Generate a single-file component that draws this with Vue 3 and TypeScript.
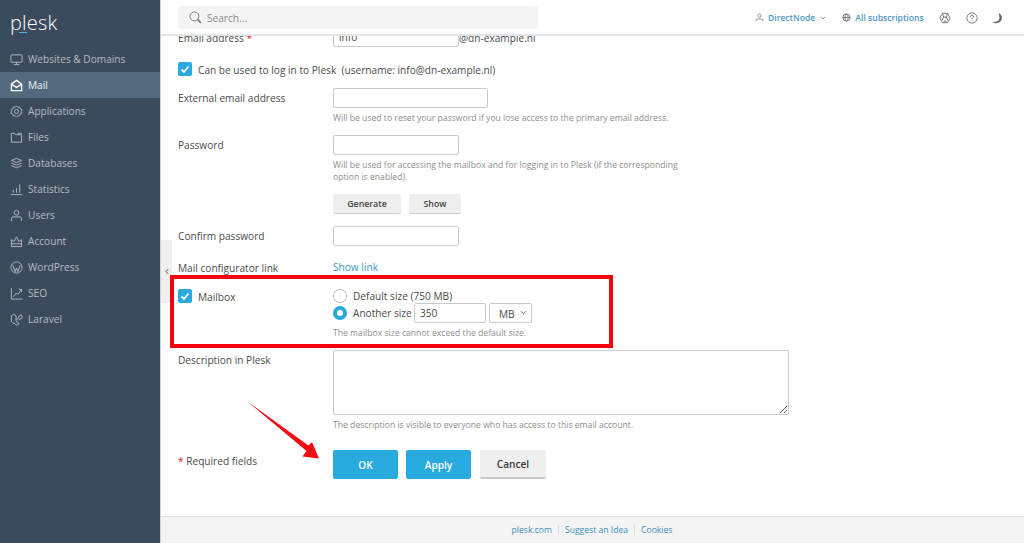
<script setup lang="ts">
interface NavItem { label: string; icon: string; active?: boolean }
const nav: NavItem[] = [
  { label: 'Websites & Domains', icon: 'monitor' },
  { label: 'Mail', icon: 'mail', active: true },
  { label: 'Applications', icon: 'gear' },
  { label: 'Files', icon: 'folder' },
  { label: 'Databases', icon: 'db' },
  { label: 'Statistics', icon: 'stats' },
  { label: 'Users', icon: 'user' },
  { label: 'Account', icon: 'crown' },
  { label: 'WordPress', icon: 'wp' },
  { label: 'SEO', icon: 'seo' },
  { label: 'Laravel', icon: 'laravel' },
]
</script>

<template>
  <div class="page">
    <aside class="side">
      <div class="logo">plesk<i class="logo-line"></i></div>
      <nav class="nav">
        <div v-for="n in nav" :key="n.label" class="nav-item" :class="{ active: n.active }">
          <svg class="nav-icon" viewBox="0 0 14 14" fill="none" stroke="currentColor" stroke-width="1">
            <template v-if="n.icon === 'monitor'"><rect x="1" y="2" width="12" height="8" rx="1" /><path d="M4 12.5h6M7 10v2.5" /></template>
            <template v-else-if="n.icon === 'mail'"><path d="M1.5 5.5 7 1.5l5.5 4v7h-11z" stroke-width="1.4" /><path d="M1.5 5.5 7 9l5.5-3.5" stroke-width="1.4" /></template>
            <template v-else-if="n.icon === 'gear'"><circle cx="7" cy="7" r="2.2" /><path d="M7 1l1.4 1.5 2-.3.6 2 1.9.9-.6 1.9.6 1.9-1.9.9-.6 2-2-.3L7 13l-1.4-1.5-2 .3-.6-2-1.9-.9.6-1.9-.6-1.900 1.900-.9.6-2 2 .3z" /></template>
            <template v-else-if="n.icon === 'folder'"><path d="M1.500 2.500h3.500l1 1.500h6.500v8h-11zM8 2.500h4.500" /></template>
            <template v-else-if="n.icon === 'db'"><path d="M7 1.500l5.500 2.200L7 6 1.500 3.700z" /><path d="M1.500 6.500 7 8.800l5.500-2.300M1.500 9.300 7 11.600l5.500-2.300" /></template>
            <template v-else-if="n.icon === 'stats'"><path d="M1 12.500h12M3.500 10.500v-3M7 10.500v-5M10.500 10.500V1.500" /></template>
            <template v-else-if="n.icon === 'user'"><circle cx="7" cy="4" r="2.500" /><path d="M1.500 13v-2.500a2 2 0 0 1 2-2h7a2 2 0 0 1 2 2V13" /></template>
            <template v-else-if="n.icon === 'crown'"><path d="M1.500 5 4.500 7 7 2l2.500 5 3-2v7.500h-11z" /><path d="M1.500 9.500h11" /></template>
            <template v-else-if="n.icon === 'wp'"><circle cx="7" cy="7" r="6" /><path d="M3 4.500 5.500 11.500 7 7.500l1.500 4L11 4.500" /></template>
            <template v-else-if="n.icon === 'seo'"><path d="M1.500 1v12h12" /><path d="M3.500 10.500 7 6.500l1.500 1.500 4-5.500M9.500 2.500h3v3" /></template>
            <template v-else><path d="M1.500 3 4 1.500 6.500 3v6l3 1.800V12l-2 1L3 10.500 1.500 9.500zM6.500 7l3-1.700V3.500L12 2l1 1.500v2L9.500 7.500" /></template>
          </svg>
          <span>{{ n.label }}</span>
        </div>
      </nav>
    </aside>

    <div class="right">
      <header class="top">
        <div class="search">
          <svg class="search-icon" viewBox="0 0 14 14" fill="none" stroke="#6f7478" stroke-width="1"><circle cx="5.800" cy="5.800" r="4.800" /><path d="M9.300 9.300l3.500 3.500" stroke-width="1.600" /></svg>
          <span>Search...</span>
        </div>
        <div class="top-links">
          <span class="tl tl-user">
            <svg class="ti" viewBox="0 0 12 12" fill="none" stroke="#6f7478"><circle cx="6" cy="3.500" r="2.200" /><path d="M1.500 11V9.500a1.500 1.500 0 0 1 1.500-1.500h6a1.500 1.500 0 0 1 1.500 1.500V11" /></svg>
            <b>DirectNode</b>
            <svg class="caret" viewBox="0 0 6 4" fill="none" stroke="#8a9299"><path d="M1 1l2 2 2-2" /></svg>
          </span>
          <span class="tl tl-subs">
            <svg class="ti" viewBox="0 0 12 12" fill="none" stroke="#55606a"><circle cx="6" cy="6" r="4.800" /><ellipse cx="6" cy="6" rx="2.200" ry="4.800" /><path d="M1.200 6h9.600" /></svg>
            <b>All subscriptions</b>
          </span>
          <svg class="ic-a" viewBox="0 0 14 14" fill="none" stroke="#62686e"><path d="M4 1.500h6L13 7l-3 5.500H4L1 7z" /><path d="M4 1.500 5.500 6 3.500 10M10 1.500 8.500 6l2 4M5.500 6h3M5 12.500 7 10l2 2.500" /></svg>
          <svg class="ic-b" viewBox="0 0 14 14" fill="none" stroke="#62686e"><circle cx="7" cy="7" r="6" /><path d="M5.200 5.500a1.800 1.800 0 1 1 2.600 1.600c-.6.300-.8.700-.8 1.400M7 9.800v1" /></svg>
          <svg class="ic-c" viewBox="0 0 14 14" fill="#62686e"><path d="M8.500 1c3 1.500 4.500 3.800 4.200 6.400-.3 3.200-3.200 5.600-6.700 5.600-1.600 0-3.100-.5-4.300-1.400 3.700.4 7.300-.8 8-3.800.5-2.300-.2-4.800-1.200-6.800z" /></svg>
        </div>
      </header>

      <main class="main">
        <div class="collapse"><svg viewBox="0 0 5 8" fill="none" stroke="#3c4b5b" stroke-width="1.200"><path d="M4 1 1 4l3 3" /></svg></div>

        <form class="form" @submit.prevent>
          <div class="row row-email">
            <label class="lab">Email address <em>*</em></label>
            <div class="field inline"><input class="inp w126" value="info" /><span>@dn-example.nl</span></div>
          </div>

          <div class="check-row row-login">
            <span class="cb"><svg viewBox="0 0 14 14" fill="none" stroke="#fff" stroke-width="1.800"><path d="M3.500 7.500 6 10l4.500-5.500" /></svg></span>
            <span class="check-text">Can be used to log in to Plesk&nbsp; (username: info@dn-example.nl)</span>
          </div>

          <div class="row row-ext">
            <label class="lab">External email address</label>
            <div class="field"><input class="inp w155" /><p class="hint">Will be used to reset your password if you lose access to the primary email address.</p></div>
          </div>

          <div class="row row-pass">
            <label class="lab">Password</label>
            <div class="field">
              <input class="inp w126" />
              <p class="hint hint-wrap">Will be used for accessing the mailbox and for logging in to Plesk (if the corresponding option is enabled).</p>
              <div class="mini-btns"><button class="mini b-gen" type="button">Generate</button><button class="mini b-show" type="button">Show</button></div>
            </div>
          </div>

          <div class="row row-conf">
            <label class="lab">Confirm password</label>
            <div class="field"><input class="inp w126" /></div>
          </div>

          <div class="row row-link">
            <label class="lab">Mail configurator link</label>
            <div class="field"><a class="link">Show link</a></div>
          </div>

          <div class="row row-box">
            <div class="lab box-lab">
              <span class="cb"><svg viewBox="0 0 14 14" fill="none" stroke="#fff" stroke-width="1.800"><path d="M3.500 7.500 6 10l4.500-5.500" /></svg></span>
              <span class="check-text">Mailbox</span>
            </div>
            <div class="field">
              <div class="radio-row r1"><span class="radio"></span><span>Default size (750 MB)</span></div>
              <div class="radio-row r2">
                <span class="radio on"></span><span class="another">Another size</span>
                <input class="inp size" value="350" />
                <span class="select">MB<svg viewBox="0 0 8 5" fill="none" stroke="#555"><path d="M1 1l3 3 3-3" /></svg></span>
              </div>
              <p class="hint hint-box">The mailbox size cannot exceed the default size.</p>
            </div>
          </div>

          <div class="row row-desc">
            <label class="lab">Description in Plesk</label>
            <div class="field">
              <textarea class="area"></textarea>
              <p class="hint hint-desc">The description is visible to everyone who has access to this email account.</p>
            </div>
          </div>

          <div class="row row-actions">
            <div class="lab req"><em>*</em> Required fields</div>
            <div class="actions">
              <button class="btn blue" type="button">OK</button>
              <button class="btn blue" type="button">Apply</button>
              <button class="btn grey" type="button">Cancel</button>
            </div>
          </div>
        </form>

        <footer class="foot">
          <a>plesk.com</a><i></i><a>Suggest an Idea</a><i></i><a>Cookies</a>
        </footer>

        <div class="redbox"></div>
        <svg class="arrow" viewBox="0 0 80 66"><path d="M1 1 61.500 44.500 65 41 72 57.500 55.500 55.500 59.500 50z" fill="#f40a12" /></svg>
      </main>
    </div>
  </div>
</template>

<style>
html, body { margin: 0; padding: 0; background: #fff; }
</style>

<style scoped>
.page {
  width: 1024px; height: 543px; display: flex; overflow: hidden; background: #fff;
  font-family: "Open Sans", "Liberation Sans", sans-serif; font-size: 10.150px; color: #4b4b4b;
}
.side { width: 160px; flex: none; background: #3c4b5b; border-right: 1px solid #cfd3d6; box-sizing: content-box; }
.logo { position: relative; height: 46px; padding: 8px 0 0 10px; box-sizing: border-box; color: #fff; font-size: 20px; font-weight: 300; line-height: 30px; letter-spacing: .2px; }
.logo-line { position: absolute; left: 19px; top: 32px; width: 8px; height: 1px; background: #4fb4e3; }
.nav-item { height: 26px; display: flex; align-items: center; padding-left: 10px; gap: 5px; color: #b4bcc4; }
.nav-item.active { background: #536a7e; color: #eef1f4; }
.nav-icon { width: 13px; height: 13px; flex: none; }
.nav-item.active .nav-icon { color: #fff; }

.right { flex: 1; min-width: 0; display: flex; flex-direction: column; }
.top { height: 36px; flex: none; box-sizing: border-box; border-bottom: 2px solid #e3e6e8; display: flex; align-items: flex-start; padding: 6px 0 0 17px; position: relative; z-index: 2; background: #fff; }
.search { width: 360px; height: 23px; background: #f4f4f4; border-radius: 3px; display: flex; align-items: center; padding-left: 11px; box-sizing: border-box; gap: 5px; color: #8a8a8a; font-size: 10.150px; }
.search-icon { width: 13px; height: 13px; }
.top-links { margin-left: 217px; display: flex; align-items: center; height: 23px; font-size: 8.600px; }
.tl { display: flex; align-items: center; gap: 4px; }
.tl b { font-weight: 600; color: #4a97bf; }
.ti { width: 9px; height: 9px; flex: none; }
.caret { width: 6px; height: 4px; margin-left: 1px; }
.tl-subs { margin-left: 16px; }
.ic-a { width: 12px; height: 12px; margin-left: 15px; }
.ic-b { width: 12px; height: 12px; margin-left: 15px; }
.ic-c { width: 12px; height: 12px; margin-left: 13px; }

.main { flex: 1; min-height: 0; position: relative; overflow: hidden; display: flex; flex-direction: column; }
.collapse { position: absolute; left: 0; top: 204px; width: 11px; height: 63px; background: #efefef; display: flex; align-items: center; justify-content: center; }
.collapse svg { width: 4px; height: 7px; }

.form { flex: 1; min-height: 0; padding: 0 0 0 17px; position: relative; }
.row { display: flex; }
.lab { width: 155px; flex: none; line-height: 15px; }
.lab em, .req em { color: #e2231a; font-style: normal; }
.field { min-width: 0; }
.inline { display: flex; align-items: flex-start; }
.inp { display: block; height: 20px; box-sizing: border-box; border: 1px solid #c9c9c9; border-radius: 2px; background: #fff; padding: 0 5px; margin: 0; font: inherit; color: #4b4b4b; outline: none; }
.w126 { width: 126px; }
.w155 { width: 155px; }
.hint { margin: 0; font-size: 8.640px; line-height: 12px; color: #8e8e8e; }

.row-email { margin-top: -9px; height: 20px; align-items: flex-start; }
.row-email .lab { padding-top: 4px; }
.row-email .inline span { line-height: 22px; }
.check-row { display: flex; align-items: center; gap: 6px; margin-top: 15px; height: 14px; padding-top: 0; }
.check-text { padding-top: 2px; }
.cb { width: 14px; height: 14px; flex: none; background: #28aade; border-radius: 2px; display: block; }
.cb svg { display: block; width: 14px; height: 14px; }
.row-ext { margin-top: 12px; }
.row-ext .lab, .row-pass .lab, .row-conf .lab { padding-top: 3px; }
.row-ext .hint { margin-top: 4px; }
.row-pass { margin-top: 11px; }
.hint-wrap { width: 350px; margin-top: 4px; }
.mini-btns { display: flex; gap: 8px; margin-top: 11px; }
.mini { height: 20px; border: 0; border-bottom: 1px solid #cfcfcf; background: #efefef; border-radius: 2px; font: 600 8.800px "Open Sans", sans-serif; color: #444; padding: 0; }
.b-gen { width: 68px; }
.b-show { width: 52px; }
.row-conf { margin-top: 12px; }
.row-link { margin-top: 14px; }
.row-link .lab { padding-top: 1px; }
.link { color: #3d96c0; line-height: 15px; display: block; }
.row-box { margin-top: 13px; height: 53px; }
.box-lab { display: flex; align-items: center; gap: 6px; height: 14px; }
.radio-row { display: flex; align-items: center; }
.r1 { height: 14px; }
.r2 { height: 20px; margin-top: 0; }
.radio { width: 14px; height: 14px; box-sizing: border-box; border: 1px solid #b9b9b9; border-radius: 50%; flex: none; margin-right: 6px; background: #fff; }
.radio.on { border: 4px solid #28aade; }
.another { width: 57px; white-space: nowrap; }
.size { width: 72px; margin-left: 4px; }
.select { width: 43px; height: 20px; box-sizing: border-box; border: 1px solid #c9c9c9; border-radius: 2px; margin-left: 3px; display: flex; align-items: center; justify-content: space-between; padding: 1px 4px 0 9px; }
.select svg { width: 7px; height: 5px; margin-top: -2px; }
.hint-box { margin-top: 4px; }
.row-desc { margin-top: 8px; }
.row-desc .lab { padding-top: 3px; }
.area { display: block; width: 456px; height: 65px; box-sizing: border-box; border: 1px solid #c9c9c9; border-radius: 2px; margin: 0; padding: 0; font: inherit; outline: none; }
.hint-desc { margin-top: 4px; }
.row-actions { margin-top: 19px; }
.req { padding-top: 4px; }
.actions { display: flex; gap: 8px; }
.btn { width: 65px; height: 29px; border: 0; border-radius: 2px; font: 600 10.150px "Open Sans", sans-serif; padding: 0; }
.blue { background: #28aade; color: #fff; }
.grey { width: 66px; background: #efefef; color: #3c3c3c; border-bottom: 2px solid #c9c9c9; margin-left: 1px; }

.foot { height: 27px; flex: none; box-sizing: border-box; background: #f4f4f4; border-top: 1px solid #e2e2e2; display: flex; align-items: center; justify-content: center; gap: 6px; font-size: 8.600px; color: #3d8fb8; padding-right: 1px; }
.foot i { width: 1px; height: 10px; background: #ddd; }

.redbox { position: absolute; left: 9px; top: 239px; width: 443px; height: 73px; box-sizing: border-box; border: 4px solid #f5000b; pointer-events: none; }
.arrow { position: absolute; left: 86px; top: 365px; width: 80px; height: 66px; pointer-events: none; }
</style>
